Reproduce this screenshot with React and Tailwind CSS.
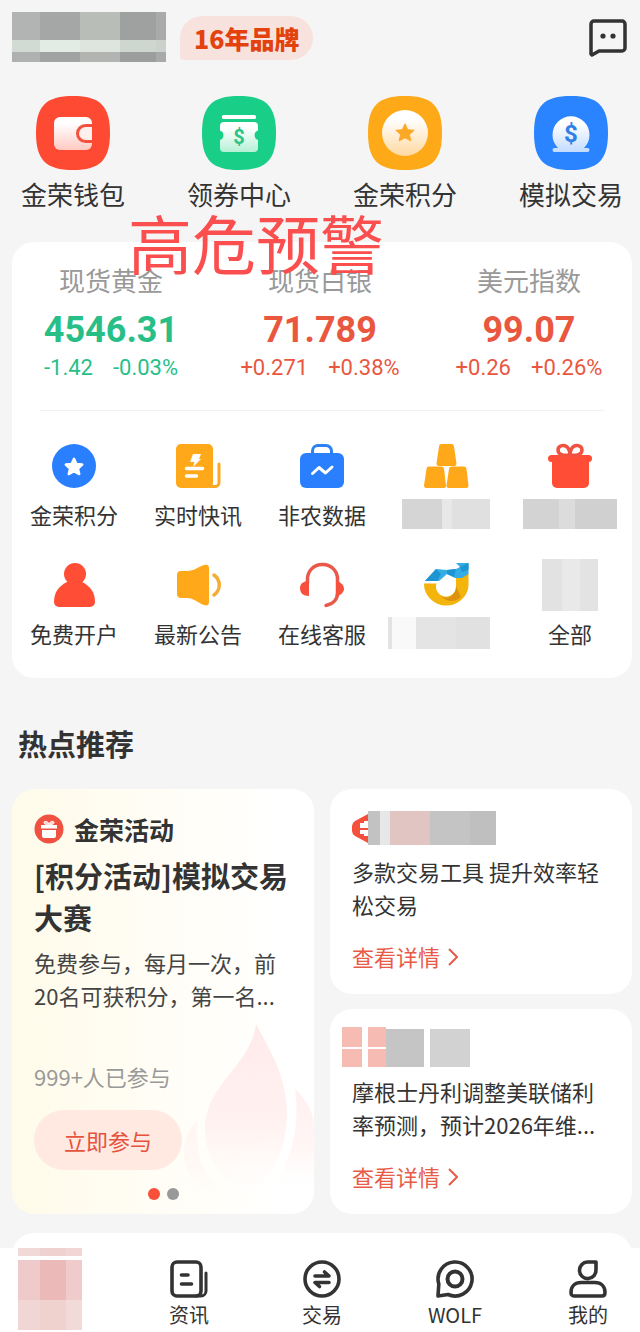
import React from "react";

const SQUIRCLE = "M37 0C64 0 74 10 74 37S64 74 37 74 0 64 0 37 10 0 37 0Z";
const STAR =
  "M0-10 3-3.6 10-3 4.8 1.8 6.4 8.6 0 5.2-6.4 8.6-4.8 1.8-10-3-3-3.6Z";

// Pixelated cover, one class string per cell
const Mosaic = ({ rows }) => (
  <div className="shrink-0" aria-hidden="true">
    {rows.map((row, i) => (
      <div key={i} className={`flex ${row.height}`}>
        {row.cells.map((cell, j) => (
          <div key={j} className={`shrink-0 ${cell}`} />
        ))}
      </div>
    ))}
  </div>
);

const COVERS = {
  brand: [
    {
      height: "h-7",
      cells: ["w-7 bg-[#b1b4b2]", "w-10 bg-[#a5a7a6]", "w-10 bg-[#b8bdb8]", "w-9 bg-[#9fa1a0]", "w-[10px] bg-[#a9abaa]"],
    },
    {
      height: "h-3",
      cells: ["w-7 bg-[#d2dad4]", "w-10 bg-[#e3ebe5]", "w-10 bg-[#dde5de]", "w-9 bg-[#cdd6cf]", "w-[10px] bg-[#cbd2cc]"],
    },
    {
      height: "h-[10px]",
      cells: ["w-7 bg-[#afb1b0]", "w-10 bg-[#a1a3a2]", "w-10 bg-[#b1b4b1]", "w-9 bg-[#9c9e9d]", "w-[10px] bg-[#a8aaa9]"],
    },
  ],
  blocks: [{ height: "h-[30px]", cells: ["w-10 bg-[#d5d5d5]", "w-[10px] bg-[#e8e8e8]", "w-[38px] bg-[#e0e0e0]"] }],
  gift: [{ height: "h-[30px]", cells: ["w-9 bg-[#d3d3d3]", "w-4 bg-[#dcdcdc]", "w-[42px] bg-[#d0d0d0]"] }],
  logo: [
    {
      height: "h-8",
      cells: ["w-1 bg-[#e3e3e3]", "w-6 bg-[#f9f9f9]", "w-10 bg-[#e4e4e4]", "w-[34px] bg-[#e1e1e1]", "w-[14px]"],
    },
  ],
  all: [{ height: "h-[52px]", cells: ["w-5 bg-[#e2e2e2]", "w-[18px] bg-[#e9e9e9]", "w-[18px] bg-[#e3e3e3]"] }],
  tools: [
    {
      height: "h-[34px]",
      cells: ["w-3 bg-[#c2c2c2]", "w-[10px] bg-[#e5e8e6]", "w-10 bg-[#e1c5c2]", "w-10 bg-[#c4c4c4]", "w-[26px] bg-[#bfbfbf]"],
    },
  ],
  news: [
    { height: "h-5", cells: ["w-5 bg-[#f6bcb4]", "w-[6px]", "w-[18px] bg-[#f6bcb4]"] },
    { height: "h-[2px]", cells: ["w-11"] },
    { height: "h-[18px]", cells: ["w-5 bg-[#f6bcb4]", "w-[6px]", "w-[18px] bg-[#f6bcb4]"] },
  ],
  newsText: [{ height: "h-[38px]", cells: ["w-[38px] bg-[#c5c5c5]", "w-[6px]", "w-10 bg-[#d2d2d2]"] }],
  home: [
    { height: "h-2", cells: ["w-[22px] bg-[#f1d9d8]", "w-[26px] bg-[#efd2d0]", "w-4 bg-[#f1d6d5]"] },
    { height: "h-1", cells: ["w-16"] },
    { height: "h-10", cells: ["w-[22px] bg-[#eecbca]", "w-[26px] bg-[#ebb9b8]", "w-4 bg-[#efcccb]"] },
    { height: "h-[30px]", cells: ["w-[22px] bg-[#f0d7d6]", "w-[26px] bg-[#efd2cd]", "w-4 bg-[#f1dad8]"] },
  ],
};

const Badge = ({ fill, id, tint, children }) => (
  <svg viewBox="0 0 74 74" className="size-[74px]" aria-hidden="true">
    <defs>
      <linearGradient id={id} x1="0" y1="0" x2="0" y2="1">
        <stop offset="0.2" stopColor="#fff" />
        <stop offset="1" stopColor={tint} />
      </linearGradient>
    </defs>
    <path d={SQUIRCLE} fill={fill} />
    {children}
  </svg>
);

const SHORTCUTS = [
  {
    label: "金荣钱包",
    icon: (
      <Badge fill="#ff4a33" id="wallet" tint="#ffc9c2">
        <rect x="18" y="21" width="38" height="33" rx="6" fill="url(#wallet)" />
        <path d="M56 29.5h-6.500a8 8 0 0 0 0 16H56" fill="#fff0ee" stroke="#f4503c" strokeWidth="3" />
      </Badge>
    ),
  },
  {
    label: "领券中心",
    icon: (
      <Badge fill="#19ce86" id="coupon" tint="#b5f0d5">
        <rect x="20" y="19" width="34" height="4" rx="1.500" fill="#fff" />
        <path
          d="M22 26h30a4 4 0 0 1 4 4v4.500a5 5 0 0 0 0 9.500V52a4 4 0 0 1-4 4H22a4 4 0 0 1-4-4v-8a5 5 0 0 0 0-9.500V30a4 4 0 0 1 4-4Z"
          fill="url(#coupon)"
        />
        <text x="37" y="48" textAnchor="middle" className="font-['Roboto',sans-serif] text-[20px] font-bold" fill="#2fc289">
          $
        </text>
      </Badge>
    ),
  },
  {
    label: "金荣积分",
    icon: (
      <Badge fill="#fea918" id="points" tint="#ffd9a0">
        <circle cx="37" cy="37" r="23" fill="url(#points)" />
        <path d={STAR} transform="translate(37 37) scale(0.920)" fill="#fba826" stroke="#fba826" strokeLinejoin="round" />
      </Badge>
    ),
  },
  {
    label: "模拟交易",
    icon: (
      <Badge fill="#2a83ff" id="demo" tint="#c3dcff">
        <path d="M24 52a18.500 18.500 0 1 1 26 0h3.500a2 2 0 0 1 0 4h-33a2 2 0 0 1 0-4Z" fill="url(#demo)" />
        <text x="37" y="46" textAnchor="middle" className="font-['Roboto',sans-serif] text-[24px] font-bold" fill="#2f7fe6">
          $
        </text>
      </Badge>
    ),
  },
];

const QUOTES = [
  { name: "现货黄金", price: "4546.31", change: "-1.42", percent: "-0.03%", color: "text-[#27bf87]" },
  { name: "现货白银", price: "71.789", change: "+0.271", percent: "+0.38%", color: "text-[#e9573f]" },
  { name: "美元指数", price: "99.07", change: "+0.26", percent: "+0.26%", color: "text-[#e9573f]" },
];

const Icon = ({ children }) => (
  <svg viewBox="0 0 44 44" className="size-11 overflow-visible" fill="none" aria-hidden="true">
    {children}
  </svg>
);

const MENU = [
  {
    label: "金荣积分",
    icon: (
      <Icon>
        <circle cx="22" cy="22" r="22" fill="#2a7fff" />
        <path d={STAR} transform="translate(22 23) scale(0.820)" fill="#fff" stroke="#fff" strokeWidth="3" strokeLinejoin="round" />
      </Icon>
    ),
  },
  {
    label: "实时快讯",
    icon: (
      <Icon>
        <rect width="37" height="44" rx="5" fill="#ffa91a" />
        <path d="M34 42.500h5a4 4 0 0 0 4-4V20" stroke="#f9a927" strokeWidth="3" strokeLinecap="round" />
        <path d="M17 10h8l-2 5h2l-8 8 1.500-5H14Z" fill="#fff" />
        <path d="M10.500 24.500h16M10.500 32h10" stroke="#fff" strokeWidth="3.500" strokeLinecap="round" />
      </Icon>
    ),
  },
  {
    label: "非农数据",
    icon: (
      <Icon>
        <path d="M12.500 11V7a5.500 5.500 0 0 1 5.500-5.500h8A5.500 5.500 0 0 1 31.500 7v4" stroke="#2f80f0" strokeWidth="3" />
        <rect y="9" width="44" height="35" rx="6" fill="#2a7fff" />
        <path d="m12.500 29.500 6.500-6 6.500 5.500 6.500-6" stroke="#fff" strokeWidth="3" strokeLinecap="round" strokeLinejoin="round" />
      </Icon>
    ),
  },
  {
    label: "",
    cover: COVERS.blocks,
    icon: (
      <Icon>
        <g fill="#ffa91a" stroke="#ffa91a" strokeWidth="5" strokeLinejoin="round">
          <path d="M17.500 2.500h10l2.500 17H15ZM5 25h12.500l2 16.500h-17ZM27.500 25H40l2 16.500H25Z" />
        </g>
      </Icon>
    ),
  },
  {
    label: "",
    cover: COVERS.gift,
    icon: (
      <Icon>
        <rect y="11" width="44" height="7" rx="3.500" fill="#ff4d36" />
        <path d="M4 15h37v24a5 5 0 0 1-5 5H9a5 5 0 0 1-5-5Z" fill="#ff4d36" />
        <path
          d="M21 11c-5 1-11 0-11-5s7-6 10-2c1.500 2 2 5 2 8 0-3 .5-6 2-8 3-4 10-3 10 2s-6 6-11 5"
          stroke="#f0523f"
          strokeWidth="3.500"
        />
      </Icon>
    ),
  },
  {
    label: "免费开户",
    icon: (
      <Icon>
        <circle cx="23" cy="11" r="11" fill="#ff4d36" />
        <path d="M15 19h15c8 4 13 10 13 20a5 5 0 0 1-5 5H7a5 5 0 0 1-5-5c0-10 5-16 13-20Z" fill="#ff4d36" />
      </Icon>
    ),
  },
  {
    label: "最新公告",
    icon: (
      <Icon>
        <path
          d="M5 8h6c7 0 11-4 17-6 3-1 5 0 5 3v34c0 3-2 4-5 3-6-2-10-7-17-7H5a4 4 0 0 1-4-4V12a4 4 0 0 1 4-4Z"
          fill="#ffa91a"
        />
        <path d="M38 12c7 5 7 15 0 20" stroke="#f5ad35" strokeWidth="3.500" strokeLinecap="round" />
      </Icon>
    ),
  },
  {
    label: "在线客服",
    icon: (
      <Icon>
        <path d="M7.500 20v-3a14.500 14.500 0 0 1 15-15.500A14.500 14.500 0 0 1 37.500 17v13c0 6-4 11-11.500 12.500" stroke="#e8594a" strokeWidth="3.500" strokeLinecap="round" />
        <path d="M9 18v15c-6 0-9-3-9-8 0-4 3-7 9-7ZM36 18c5 1 8 4 8 8 0 3-3 6-8 8Z" fill="#f7503c" />
      </Icon>
    ),
  },
  {
    label: "",
    cover: COVERS.logo,
    icon: (
      <Icon>
        <path d="M0 20.500h12.500a10 10 0 1 0 19.500 3V14l12.500-4v13A22.300 21.500 0 0 1 0 20.500Z" fill="#f3b40c" />
        <path d="M17 33c5 3 10 2 13-3 1.500-2 2-4 2-7l5 11c-5 5-14 6-20-1Z" fill="#dc9410" />
        <path d="M1 18 12 6l11 1 9-1 4-2-4-4h12.500v11L38 15h-7l-8-4-8 7Z" fill="#34ace6" />
        <path d="M1 18 12 6l5 5-4 7ZM23 7l9-1-2 8-7-3ZM36 4l8.500-4v7L38 9Z" fill="#1d95d2" />
      </Icon>
    ),
  },
  { label: "全部", icon: <Mosaic rows={COVERS.all} /> },
];

const NavIcon = ({ children }) => (
  <svg viewBox="0 0 38 38" className="size-[38px]" fill="none" stroke="#333" strokeWidth="3.600" strokeLinecap="round" strokeLinejoin="round" aria-hidden="true">
    {children}
  </svg>
);

const TABS = [
  {
    label: "资讯",
    icon: (
      <NavIcon>
        <rect x="2" y="2" width="29" height="34" rx="5" />
        <path d="M36 13v18a5 5 0 0 1-5 5h-5" strokeWidth="3" />
        <path d="M11.500 15h6.500M11.500 24h10" />
      </NavIcon>
    ),
  },
  {
    label: "交易",
    icon: (
      <NavIcon>
        <circle cx="19" cy="19" r="17" />
        <path d="M12 16h14l-4.500-4M26 22.500H12l4.500 4" />
      </NavIcon>
    ),
  },
  {
    label: "WOLF",
    icon: (
      <NavIcon>
        <path d="m2 36 .8-12A17 17 0 1 1 12 34.500Z" />
        <circle cx="19" cy="19" r="7.500" strokeWidth="4" />
      </NavIcon>
    ),
  },
  {
    label: "我的",
    icon: (
      <NavIcon>
        <path d="M18.500 2H27v7.500A8.300 8.300 0 1 1 18.500 2Z" />
        <path d="M12 22.500h14c6 0 10 4 10 10 0 2-1 3.500-3 3.500H5c-2 0-3-1.500-3-3.500 0-6 4-10 10-10Z" />
      </NavIcon>
    ),
  },
];

const MoreLink = () => (
  <a href="#detail" className="mt-[19px] flex items-center gap-2 px-[22px] text-[22px] leading-[33px] text-[#e85b48]">
    查看详情
    <svg viewBox="0 0 10 18" className="h-[18px] w-[10px]" fill="none" stroke="currentColor" strokeWidth="2" aria-hidden="true">
      <path d="m1 1 8 8-8 8" />
    </svg>
  </a>
);

const App = () => {
  return (
    <div className="relative min-h-screen bg-[#f5f5f5] font-['Noto_Sans_CJK_SC',sans-serif] text-[#333]">
      <header className="flex h-[62px] items-start pt-3 pr-[13px] pl-3">
        <Mosaic rows={COVERS.brand} />
        <div className="mt-1 ml-[14px] flex h-11 items-center rounded-[22px] rounded-bl-[4px] bg-[#f8e2dd] px-[14px]">
          <span className="text-[25px] leading-8 font-black text-[#e3420f]">16年品牌</span>
        </div>
        <button type="button" aria-label="消息" className="mt-[7px] ml-auto">
          <svg viewBox="0 0 38 38" className="size-[38px]" fill="none" aria-hidden="true">
            <path d="M2 35V5a3 3 0 0 1 3-3h28a3 3 0 0 1 3 3v24a3 3 0 0 1-3 3H10l-7 4Z" stroke="#333" strokeWidth="3.500" strokeLinejoin="round" />
            <circle cx="14" cy="17" r="2.600" fill="#333" />
            <circle cx="24" cy="17" r="2.600" fill="#333" />
          </svg>
        </button>
      </header>

      {/* --- Shortcuts --- */}
      <nav className="mt-[34px] flex justify-between pr-[17px] pl-[21px]">
        {SHORTCUTS.map((item) => (
          <a key={item.label} href="#shortcut" className="flex flex-col items-center gap-2 text-[26px] leading-8">
            {item.icon}
            {item.label}
          </a>
        ))}
      </nav>

      <p className="absolute top-[209px] left-32 text-[64px] leading-[64px] text-[#fb4f4f]">高危预警</p>

      <main className="pr-2 pl-3">
        {/* --- Quotes and menu --- */}
        <section className="mt-8 rounded-[22px] bg-white pt-[22px] pb-[33px]">
          <div className="flex justify-between pr-[23px] pl-[19px]">
            {QUOTES.map((quote) => (
              <div key={quote.name} className="flex w-40 flex-col items-center">
                <h3 className="text-[26px] leading-8 text-[#999]">{quote.name}</h3>
                <p className={`mt-[14px] font-['Roboto',sans-serif] text-[36px] leading-10 font-bold ${quote.color}`}>{quote.price}</p>
                <p className={`mt-[6px] flex gap-5 font-['Roboto',sans-serif] text-[22px] leading-6 whitespace-nowrap ${quote.color}`}>
                  <span>{quote.change}</span>
                  <span>{quote.percent}</span>
                </p>
              </div>
            ))}
          </div>
          <hr className="mx-7 mt-[30px] border-[#f2f2f2]" />
          <div className="mt-[33px] grid grid-cols-5 gap-y-[37px]">
            {MENU.map((item, i) => (
              <a key={i} href="#menu" className="flex flex-col items-center gap-[14px] text-[22px] leading-6">
                <span className="flex size-11 items-center justify-center">{item.icon}</span>
                <span className="flex h-6 items-center justify-center">
                  {item.cover ? <Mosaic rows={item.cover} /> : item.label}
                </span>
              </a>
            ))}
          </div>
        </section>

        {/* --- Hot picks --- */}
        <h2 className="mt-[45px] pl-[6px] text-[29px] leading-10 font-bold">热点推荐</h2>
        <section className="mt-[26px] grid grid-cols-2 gap-4">
          <article className="relative overflow-hidden rounded-[22px] bg-linear-to-r from-[#fffbea] to-white to-90% px-[22px] pt-[25px] pb-[14px]">
            <svg viewBox="0 0 130 190" className="absolute right-0 bottom-0 h-[190px] w-[130px]" aria-hidden="true">
              <defs>
                <linearGradient id="flame" x1="0" y1="0" x2="0" y2="1">
                  <stop offset="0" stopColor="#ffeaea" />
                  <stop offset="0.6" stopColor="#fff2f0" />
                  <stop offset="1" stopColor="#fffaf8" stopOpacity="0" />
                </linearGradient>
              </defs>
              <path d="M72 0c10 20 31 50 31 90 0 32-12 58-34 80-30-8-46-32-48-62C20 60 66 44 72 0Z" fill="url(#flame)" />
              <path d="M111 64c10 12 19 22 19 40v60H88c20-28 28-60 23-100Z" fill="url(#flame)" opacity="0.700" />
              <path d="M13 96c-2 34 6 60 32 80-30-4-45-24-45-48 0-14 5-22 13-32Z" fill="url(#flame)" opacity="0.400" />
            </svg>
            <div className="relative">
              <div className="flex h-[30px] items-center gap-[10px]">
                <svg viewBox="0 0 30 30" className="size-[30px]" aria-hidden="true">
                  <circle cx="15" cy="15" r="14.500" fill="#ef5240" />
                  <path d="M7 11h16v3.500H7ZM8 16h14v6a2 2 0 0 1-2 2H10a2 2 0 0 1-2-2Z" fill="#fff" />
                  <path d="M15 11c-3 0-5-1-5-2.500S13.500 6.500 15 10c1.500-3.500 5-3 5-1.500S18 11 15 11Z" fill="#fbd5d0" stroke="#fff" />
                </svg>
                <h3 className="text-[25px] leading-[30px] font-bold">金荣活动</h3>
              </div>
              <p className="mt-[10px] text-[29px] leading-[42px] font-bold">[积分活动]模拟交易大赛</p>
              <p className="mt-2 text-[22px] leading-[33px] text-[#444]">免费参与，每月一次，前20名可获积分，第一名...</p>
              <p className="mt-12 text-[22px] leading-[33px] text-[#999]">999+人已参与</p>
              <button type="button" className="mt-[17px] h-[60px] w-[148px] rounded-full bg-[#ffe9e1] text-[22px] text-[#e4533c]">
                立即参与
              </button>
              <div className="mt-[18px] flex justify-center gap-[7px]">
                <span className="size-3 rounded-full bg-[#f9503a]" />
                <span className="size-3 rounded-full bg-[#999]" />
              </div>
            </div>
          </article>

          <div className="flex flex-col gap-[15px]">
            <article className="flex-1 rounded-[22px] bg-white">
              <div className="flex h-[66px] items-start pt-[22px] pl-[22px]">
                <svg viewBox="0 0 16 34" className="h-[34px] w-4" aria-hidden="true">
                  <path d="M16 3 3 10Q0 12 0 15v5q0 3 3 5l13 7Z" fill="#f4503c" />
                  <path d="M8 12h4v-2h4v7H8ZM8 19h8v6h-4v-2H8Z" fill="#fff" />
                </svg>
                <Mosaic rows={COVERS.tools} />
              </div>
              <p className="px-[22px] text-[22px] leading-[33px]">多款交易工具 提升效率轻松交易</p>
              <MoreLink />
            </article>
            <article className="flex-1 rounded-[22px] bg-white">
              <div className="flex h-[66px] items-start pt-[18px] pl-3">
                <Mosaic rows={COVERS.news} />
                <div className="pt-[2px]">
                  <Mosaic rows={COVERS.newsText} />
                </div>
              </div>
              <p className="px-[22px] text-[22px] leading-[33px]">摩根士丹利调整美联储利率预测，预计2026年维...</p>
              <MoreLink />
            </article>
          </div>
        </section>

        <section className="mt-[19px] h-24 rounded-t-[22px] bg-white" />
      </main>

      {/* --- Tab bar --- */}
      <nav className="fixed inset-x-0 bottom-0 flex h-[84px] justify-between bg-white pr-5 pl-[18px]">
        <a href="#home" aria-label="首页" className="w-[70px]">
          <Mosaic rows={COVERS.home} />
        </a>
        {TABS.map((tab) => (
          <a key={tab.label} href="#tab" className="flex w-16 flex-col items-center gap-[5px] pt-3 text-[20px] leading-6">
            {tab.icon}
            {tab.label}
          </a>
        ))}
      </nav>
    </div>
  );
};

export default App;
